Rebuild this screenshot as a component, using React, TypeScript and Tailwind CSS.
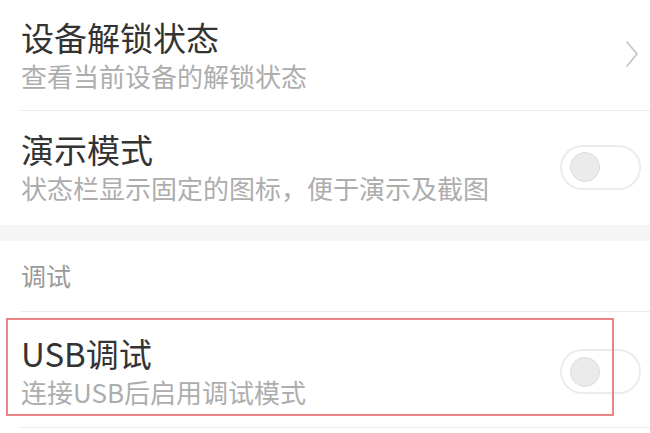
const font = { fontFamily: '"Noto Sans CJK SC", "Noto Sans", sans-serif' }

function Toggle() {
  return (
    <div className="flex h-[45px] w-[81px] items-center rounded-full border-2 border-[#ececec] bg-white pl-[8px]">
      <div className="h-[30px] w-[30px] rounded-full border border-[#dcdcdc] bg-[#ebebeb]" />
    </div>
  )
}

function Chevron() {
  return (
    <svg width="14" height="28" viewBox="0 0 14 28" fill="none">
      <path d="M2 2 L12 14 L2 26" stroke="#c4c4c4" strokeWidth="1.6" strokeLinecap="round" strokeLinejoin="round" />
    </svg>
  )
}

function Row({
  title,
  desc,
  height,
  right,
  children,
}: {
  title: string
  desc: string
  height: string
  right: React.ReactNode
  children?: React.ReactNode
}) {
  return (
    <div className={`relative flex items-center justify-between pl-[21px] pr-[9px] ${height}`}>
      <div className="flex flex-col">
        <span className="text-[33px] leading-[41px] text-[#333333]">{title}</span>
        <span className="text-[26px] leading-[36px] text-[#adadad]">{desc}</span>
      </div>
      {right}
      {children}
    </div>
  )
}

function Divider() {
  return <div className="ml-[20px] h-px bg-[#ececec]" />
}

export default function App() {
  return (
    <div className="flex h-[433px] w-[650px] flex-col overflow-hidden bg-white" style={font}>
      <Row
        title="设备解锁状态"
        desc="查看当前设备的解锁状态"
        height="h-[110px]"
        right={
          <div className="mr-[2px] mt-[-2px]">
            <Chevron />
          </div>
        }
      />
      <Divider />
      <Row
        title="演示模式"
        desc="状态栏显示固定的图标，便于演示及截图"
        height="h-[114px] pb-[2px]"
        right={<Toggle />}
      />
      <div className="h-[16px] bg-[#f5f5f5]" />
      <div className="flex h-[70px] items-center pl-[21px] text-[25px] text-[#9a9a9a]">调试</div>
      <Divider />
      <Row
        title="USB调试"
        desc="连接USB后启用调试模式"
        height="h-[115px] pt-[4px]"
        right={<Toggle />}
      >
        <div className="absolute left-[6px] top-[6px] h-[98px] w-[608px] border-2 border-[#e98585]" />
      </Row>
      <Divider />
    </div>
  )
}
